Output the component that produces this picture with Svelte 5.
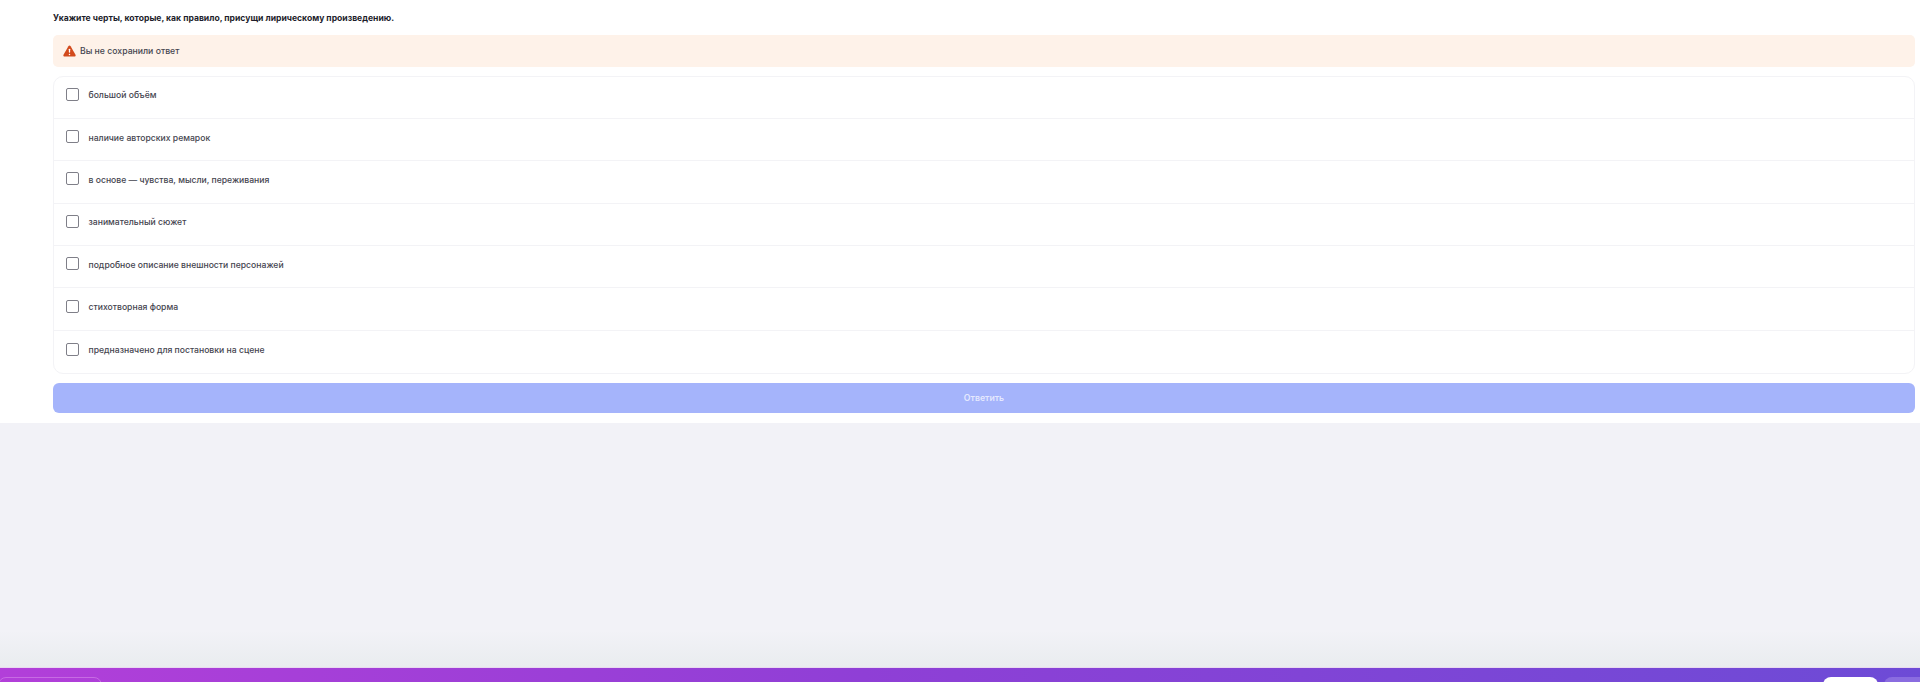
<script>
	const options = [
		'большой объём',
		'наличие авторских ремарок',
		'в основе — чувства, мысли, переживания',
		'занимательный сюжет',
		'подробное описание внешности персонажей',
		'стихотворная форма',
		'предназначено для постановки на сцене'
	];
</script>

<div class="page">
	<main class="task">
		<p class="question">Укажите черты, которые, как правило, присущи лирическому произведению.</p>
		<div class="alert">
			<svg width="13" height="12" viewBox="0 0 14 13" aria-hidden="true">
				<path d="M7 .6c-.5 0-.9.3-1.200.7L.5 10.500c-.5.9.1 2 1.200 2h10.600c1.100 0 1.700-1.100 1.200-2L8.200 1.300C7.900.9 7.500.6 7 .6z" fill="#d24a1c" />
				<rect x="6.300" y="4" width="1.400" height="4.300" rx=".7" fill="#fff" />
				<circle cx="7" cy="10.200" r=".8" fill="#fff" />
			</svg>
			<span>Вы не сохранили ответ</span>
		</div>
		<ul class="options">
			{#each options as option}
				<li>
					<span class="box"></span>
					<span>{option}</span>
				</li>
			{/each}
		</ul>
		<button class="submit" disabled>Ответить</button>
	</main>
	<div class="spacer"></div>
	<footer class="bar">
		<span class="pill outline"></span>
		<span class="pill white"></span>
		<span class="pill faded"></span>
	</footer>
</div>

<style>
	:global(body) {
		background: #f2f2f7;
		font-family: Inter, "Liberation Sans", sans-serif;
	}

	.page {
		height: 682px;
		display: flex;
		flex-direction: column;
		overflow: hidden;
	}

	.task {
		background: #fff;
		height: 423px;
		box-sizing: border-box;
		padding: 10px 5px 0 53px;
		color: #1d1d2b;
	}

	.question {
		margin: 0;
		height: 17px;
		line-height: 17px;
		font-size: 8.6px;
		font-weight: 700;
	}

	.alert {
		margin-top: 8px;
		height: 32px;
		display: flex;
		align-items: center;
		gap: 4px;
		padding-left: 10px;
		background: #fef2e9;
		border-radius: 5px;
		font-size: 8.7px;
		font-weight: 500;
		color: #45454f;
	}

	.options {
		list-style: none;
		margin: 8.5px 0 0;
		padding: 0;
		border: 1px solid #f3f3f6;
		border-radius: 10px;
		background: #fff;
	}

	li {
		height: 42.4px;
		box-sizing: border-box;
		display: flex;
		align-items: center;
		gap: 10px;
		padding: 0 0 4px 11.5px;
		font-size: 8.65px;
		font-weight: 500;
		color: #45454f;
		border-bottom: 1px solid #f3f3f6;
	}

	li:last-child {
		border-bottom: 0;
	}

	.box {
		width: 13px;
		height: 13px;
		box-sizing: border-box;
		border: 1.6px solid #7f7f88;
		border-radius: 2px;
		margin-top: -2px;
	}

	.submit {
		display: block;
		width: 100%;
		height: 30px;
		margin-top: 9px;
		border: 0;
		border-radius: 6px;
		background: #a5b4fb;
		color: #e4e8fe;
		font: 600 8.7px Inter, "Liberation Sans", sans-serif;
	}

	.spacer {
		flex: 1;
		background: linear-gradient(#f2f2f7 85%, #e9ecef);
	}

	.bar {
		height: 15px;
		flex: none;
		display: flex;
		align-items: flex-start;
		padding-top: 9px;
		box-sizing: border-box;
		background: linear-gradient(90deg, #b23fd9, #8f3fd6 45%, #6d4bd6);
		border-top: 1px solid #e9d9f0;
	}

	.pill {
		height: 30px;
		border-radius: 8px;
	}

	.outline {
		width: 102px;
		margin-left: -2px;
		border: 1px solid #c76be3;
	}

	.white {
		width: 55px;
		margin-left: auto;
		background: #fff;
	}

	.faded {
		width: 50px;
		margin-left: 6px;
		margin-right: -14px;
		background: #8a6ce0;
	}
</style>
